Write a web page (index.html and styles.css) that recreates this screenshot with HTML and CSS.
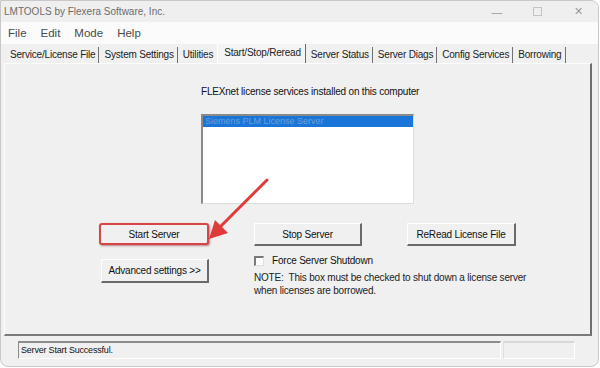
FILE: index.html
```html
<!DOCTYPE html>
<html lang="en">
<head>
    <meta charset="UTF-8">
    <title>LMTOOLS by Flexera Software, Inc.</title>
    <link rel="stylesheet" href="styles.css">
</head>
<body>
    <div class="window">
        <div class="titlebar">
            <span class="title">LMTOOLS by Flexera Software, Inc.</span>
            <div class="controls">
                <span class="ctl">&#8212;</span>
                <span class="ctl box"></span>
                <span class="ctl">&#10005;</span>
            </div>
        </div>

        <div class="menubar">
            <span>File</span>
            <span>Edit</span>
            <span>Mode</span>
            <span>Help</span>
        </div>

        <div class="tabs">
            <span class="tab">Service/License File</span>
            <span class="tab">System Settings</span>
            <span class="tab">Utilities</span>
            <span class="tab active">Start/Stop/Reread</span>
            <span class="tab">Server Status</span>
            <span class="tab">Server Diags</span>
            <span class="tab">Config Services</span>
            <span class="tab">Borrowing</span>
        </div>

        <div class="panel">
            <p class="caption">FLEXnet license services installed on this computer</p>
            <div class="listbox">
                <div class="item selected">Siemens PLM License Server</div>
            </div>

            <div class="actions">
                <button class="btn highlight">Start Server</button>
                <button class="btn">Stop Server</button>
                <button class="btn">ReRead License File</button>

                <button class="btn adv">Advanced settings &gt;&gt;</button>
                <div class="force">
                    <label class="check"><span class="checkbox"></span>Force Server Shutdown</label>
                    <p class="note">NOTE:&nbsp; This box must be checked to shut down a license server<br>when licenses are borrowed.</p>
                </div>
            </div>

            <!-- red arrow pointing at Start Server -->
            <svg class="arrow" width="70" height="70" viewBox="0 0 70 70">
                <line x1="62" y1="4" x2="14" y2="52" stroke="#e03a3a" stroke-width="3" stroke-linecap="round"/>
                <polygon points="4,63 10,44 23,57" fill="#e03a3a"/>
            </svg>
        </div>

        <div class="statusbar">
            <div class="field main">Server Start Successful.</div>
            <div class="field"></div>
        </div>
    </div>
</body>
</html>
```

FILE: styles.css
```css
* {
    box-sizing: border-box;
}

body {
    margin: 0;
    background: #ffffff;
    font-family: "Liberation Sans", Arial, sans-serif;
    color: #111;
}

.window {
    width: 599px;
    height: 367px;
    border: 1px solid #c8c8c8;
    border-radius: 0 8px 8px 8px;
    background: #f0f0f0;
    overflow: hidden;
    display: flex;
    flex-direction: column;
}

.titlebar {
    height: 21px;
    display: flex;
    align-items: center;
    justify-content: space-between;
    background: #efefef;
    padding-left: 3px;
}

.title {
    font-size: 10px;
    color: #6c6c6c;
}

.controls {
    display: flex;
    align-items: center;
}

.ctl {
    width: 40px;
    text-align: center;
    font-size: 11px;
    color: #9a9a9a;
}

.ctl.box {
    width: 9px;
    height: 9px;
    border: 1px solid #c4c4c4;
    margin: 0 16px;
}

.menubar {
    height: 22px;
    display: flex;
    align-items: center;
    gap: 14px;
    padding-left: 7px;
    background: #fbfbfb;
    font-size: 11.5px;
    color: #4a4a4a;
}

.tabs {
    height: 19px;
    display: flex;
    align-items: flex-end;
    padding-left: 4px;
    font-size: 10px;
    letter-spacing: -0.2px;
}

.tab {
    height: 16px;
    padding: 0 3px 0 5px;
    border-right: 1px solid #707070;
    line-height: 15px;
    white-space: nowrap;
    color: #222;
}

.tab:nth-child(3) {
    border-right: none;
    padding-right: 4px;
}

.tab.active {
    height: 19px;
    line-height: 17px;
    padding: 0 4px 0 6px;
    background: #f4f4f4;
    border-left: 1px solid #ffffff;
    border-right: 1px solid #6a6a6a;
}

.panel {
    position: relative;
    height: 273px;
    margin: 0 6px 0 3px;
    border-left: 1px solid #fdfdfd;
    border-top: 1px solid #fdfdfd;
    border-right: 2px solid #6e6e6e;
    border-bottom: 2px solid #7a7a7a;
    background: #f0f0f0;
}

.caption {
    margin: 22px 0 0 196px;
    font-size: 10px;
    letter-spacing: -0.2px;
}

.listbox {
    width: 213px;
    height: 90px;
    margin: 17px 0 0 196px;
    background: #ffffff;
    border-top: 2px solid #8a8a8a;
    border-left: 2px solid #8a8a8a;
    border-right: 1px solid #dcdcdc;
    border-bottom: 1px solid #dcdcdc;
}

.item {
    height: 11px;
    font-size: 9px;
    line-height: 11px;
    padding-left: 2px;
    white-space: nowrap;
}

.item.selected {
    background: #1976d8;
    color: #6e9fd8;
}

.actions {
    display: grid;
    grid-template-columns: 110px 108px 109px;
    column-gap: 45px;
    row-gap: 12px;
    margin: 19px 0 0 94px;
    align-items: start;
}

.btn {
    height: 23px;
    font-family: inherit;
    font-size: 10px;
    letter-spacing: -0.2px;
    color: #111;
    background: #f0f0f0;
    border-top: 1px solid #ffffff;
    border-left: 1px solid #ffffff;
    border-right: 2px solid #6a6a6a;
    border-bottom: 2px solid #6a6a6a;
    border-radius: 0;
    padding: 0;
}

.btn.highlight {
    height: 22px;
    border: 2px solid #d64646;
    border-radius: 3px;
    box-shadow: 1px 1px 2px rgba(120, 30, 30, 0.5);
}

.btn.adv {
    height: 24px;
    margin-top: 1px;
    width: 108px;
    margin-left: 2px;
}

.force {
    grid-column: 2 / 4;
    margin-top: -3px;
}

.check {
    display: flex;
    align-items: center;
    gap: 8px;
    font-size: 10px;
    letter-spacing: -0.2px;
}

.checkbox {
    width: 10px;
    height: 10px;
    background: #ffffff;
    border-top: 2px solid #7a7a7a;
    border-left: 2px solid #7a7a7a;
    border-right: 1px solid #e0e0e0;
    border-bottom: 1px solid #e0e0e0;
}

.note {
    margin: 5px 0 0;
    font-size: 10px;
    letter-spacing: -0.2px;
    line-height: 13px;
    white-space: nowrap;
    color: #222;
}

.arrow {
    position: absolute;
    left: 200px;
    top: 112px;
}

.statusbar {
    display: flex;
    gap: 2px;
    padding: 5px 0 0 17px;
}

.field {
    height: 18px;
    border-top: 2px solid #8c8c8c;
    border-left: 1px solid #8c8c8c;
    border-right: 1px solid #ffffff;
    border-bottom: 1px solid #ffffff;
    font-size: 9px;
    letter-spacing: -0.2px;
    line-height: 15px;
    padding-left: 2px;
}

.field.main {
    width: 483px;
}

.field:last-child {
    width: 72px;
    border-top-color: #d8d8d8;
    border-left-color: #e0e0e0;
}
```
